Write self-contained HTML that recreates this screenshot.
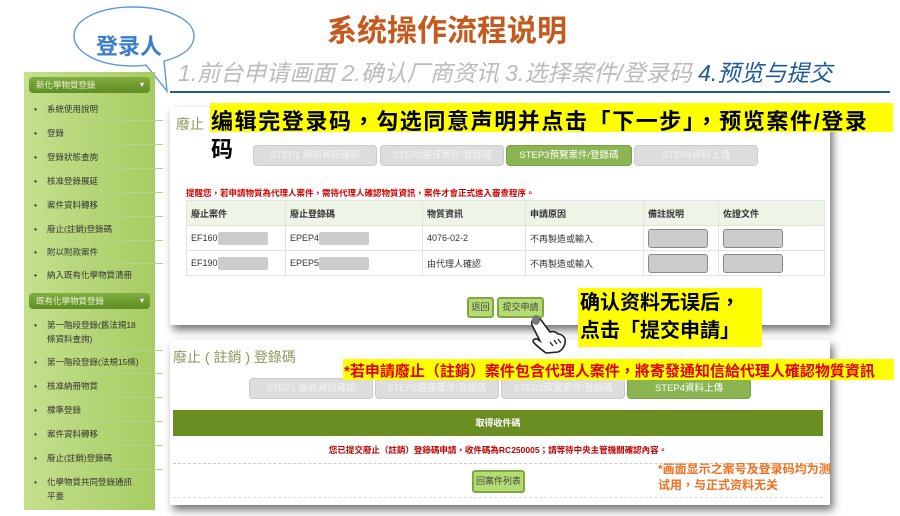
<!DOCTYPE html>
<html><head><meta charset="utf-8"><style>
*{margin:0;padding:0;box-sizing:border-box}
body{width:900px;height:516px;background:#fff;position:relative;overflow:hidden;font-family:"Liberation Sans","Noto Sans CJK TC",sans-serif}
.a{position:absolute;white-space:nowrap}
.sb{position:absolute;left:24px;top:72px;width:131px;height:438px;background:linear-gradient(90deg,#c5e08e,#a6cc62);}
.hd{position:absolute;left:5px;width:121px;height:16px;background:linear-gradient(#82ad40,#5f8d24);border-radius:4px;color:#eaf3d8;font-size:8.5px;line-height:16px;padding-left:7px}
.hd:after{content:"▾";position:absolute;right:6px;top:0;font-size:8px;color:#fff}
.it{position:absolute;left:10px;font-size:8.5px;color:#333;line-height:14px}
.it:before{content:"•";position:absolute;left:0}
.it span{display:block;margin-left:13px}
.ln{position:absolute;left:44px;width:95px;height:1px;background:#b6d386}
.panel{position:absolute;background:#fff;box-shadow:3px 5px 8px rgba(0,0,0,.55)}
.st{position:absolute;height:21px;border:1px solid #ccc;border-radius:4px;background:#ddd;color:#f4f4f4;font-size:9.5px;text-align:center;line-height:20px}
.st.g{background:#8ab552;border-color:#7aa045;color:#fff}
table{position:absolute;border-collapse:collapse;font-size:9px;color:#333}
td{border:1px solid #e2e2e2;height:25px;padding-left:4px}
.bl{display:inline-block;width:50px;height:13px;background:#ccc;border-radius:2px;vertical-align:middle}
.ib{display:block;width:60px;height:19px;background:#ccc;border:1px solid #888;border-radius:3px}
.btn{position:absolute;height:21px;background:#b5dc72;border:2px solid #7fa83e;border-radius:3px;font-size:9px;color:#444;text-align:center;line-height:17px}
</style></head><body>

<div class="a" style="left:327px;top:6px;font-size:30px;font-weight:bold;color:#c55a1f">系统操作流程说明</div>
<div class="a" style="left:178px;top:54px;font-size:23px;font-style:italic;color:#bbb">1.前台申请画面 2.确认厂商资讯 3.选择案件/登录码 <span style="color:#1f5a96">4.预览与提交</span></div>
<div class="a" style="left:170px;top:91px;width:720px;height:2px;background:#1f5f8b"></div>

<svg class="a" style="left:70px;top:4px" width="140" height="92"><path d="M63 3C30 3 4 15 4 32c0 17 26 30 59 30 5 0 9 0 13-1l21 26-3-30c20-5 30-14 30-25C124 15 96 3 63 3Z" fill="#fff" stroke="#5b9bd5" stroke-width="1.4"/></svg>
<div class="a" style="left:96px;top:29px;font-size:22px;font-weight:bold;color:#3a7dc8">登录人</div>

<div class="sb">
<div class="hd" style="top:5px">新化學物質登錄</div>
<div class="it" style="top:30px"><span>系統使用說明</span></div><div class="ln" style="top:48px;left:44px"></div>
<div class="it" style="top:54px"><span>登錄</span></div><div class="ln" style="top:72px"></div>
<div class="it" style="top:78px"><span>登錄狀態查詢</span></div><div class="ln" style="top:96px"></div>
<div class="it" style="top:102px"><span>核准登錄展延</span></div><div class="ln" style="top:120px"></div>
<div class="it" style="top:126px"><span>案件資料轉移</span></div><div class="ln" style="top:144px"></div>
<div class="it" style="top:150px"><span>廢止(註銷)登錄碼</span></div><div class="ln" style="top:168px"></div>
<div class="it" style="top:173px"><span>附以附款案件</span></div><div class="ln" style="top:191px"></div>
<div class="it" style="top:196px"><span>納入既有化學物質清冊</span></div>
<div class="hd" style="top:221px">既有化學物質登錄</div>
<div class="it" style="top:246px"><span>第一階段登錄(舊法規18<br>條資料查詢)</span></div><div class="ln" style="top:278px"></div>
<div class="it" style="top:283px"><span>第一階段登錄(法規15條)</span></div><div class="ln" style="top:301px"></div>
<div class="it" style="top:307px"><span>核准納冊物質</span></div><div class="ln" style="top:325px"></div>
<div class="it" style="top:331px"><span>標準登錄</span></div><div class="ln" style="top:349px"></div>
<div class="it" style="top:355px"><span>案件資料轉移</span></div><div class="ln" style="top:373px"></div>
<div class="it" style="top:379px"><span>廢止(註銷)登錄碼</span></div><div class="ln" style="top:397px"></div>
<div class="it" style="top:403px"><span>化學物質共同登錄通訊<br>平臺</span></div>
</div>

<div class="panel" style="left:170px;top:107px;width:660px;height:218px"></div>
<div class="a" style="left:176px;top:114px;font-size:14px;color:#8a9a5a">廢止（</div>
<div class="st" style="left:253px;top:145px;width:124px">STEP1 廠商資訊確認</div>
<div class="st" style="left:380px;top:145px;width:124px">STEP2選擇案件/登錄碼</div>
<div class="st g" style="left:506px;top:145px;width:126px">STEP3預覽案件/登錄碼</div>
<div class="st" style="left:634px;top:145px;width:124px">STEP4資料上傳</div>
<div class="a" style="left:210px;top:103px;width:683px;height:29px;background:#ffff00"></div>
<div class="a" style="left:211px;top:104px;font-size:22px;letter-spacing:1.6px;font-weight:bold;color:#000">编辑完登录码，勾选同意声明并点击「下一步」，预览案件/登录</div>
<div class="a" style="left:211px;top:132px;font-size:22px;font-weight:bold;color:#000">码</div>
<div class="a" style="left:186px;top:187px;font-size:8.5px;font-weight:bold;color:#c00">提醒您，若申請物質為代理人案件，需待代理人確認物質資訊，案件才會正式進入審查程序。</div>
<table style="left:186px;top:200px;width:639px">
<tr style="background:#eef5e6;font-weight:bold"><td style="width:99px">廢止案件</td><td style="width:137px">廢止登錄碼</td><td style="width:103px">物質資訊</td><td style="width:118px">申請原因</td><td style="width:75px">備註說明</td><td>佐證文件</td></tr>
<tr><td>EF160<span class="bl"></span></td><td>EPEP4<span class="bl"></span></td><td>4076-02-2</td><td>不再製造或輸入</td><td><span class="ib"></span></td><td><span class="ib"></span></td></tr>
<tr><td>EF190<span class="bl"></span></td><td>EPEP5<span class="bl"></span></td><td>由代理人確認</td><td>不再製造或輸入</td><td><span class="ib"></span></td><td><span class="ib"></span></td></tr>
</table>
<div class="btn" style="left:467px;top:297px;width:27px">返回</div>
<div class="btn" style="left:497px;top:297px;width:47px">提交申請</div>

<div class="panel" style="left:170px;top:340px;width:660px;height:165px"></div>
<svg class="a" style="left:528px;top:312px" width="40" height="42"><path d="M5 8c2-4 6-3 8 0l9 12c3-1 6 0 8 2 3 0 6 2 7 5 1 5-2 11-7 13l-12 1c-4-3-9-7-12-10-2-2 0-5 3-4l3 2L4 13c-1-2 0-4 1-5Z" fill="#fff" stroke="#222" stroke-width="1.6"/><path d="M22 30l3 4M26 28l3 4M30 27l3 4" stroke="#222" stroke-width="1.3"/><ellipse cx="8" cy="8" rx="4" ry="5" fill="#777"/></svg>
<div class="a" style="left:578px;top:288px;width:184px;height:59px;background:#ffff00"></div>
<div class="a" style="left:580px;top:289px;font-size:20px;font-weight:bold;line-height:28px;color:#000">确认资料无误后，<br>点击「提交申請」</div>

<div class="a" style="left:173px;top:347px;font-size:14px;color:#8a9a5a">廢止 ( 註銷 ) 登錄碼</div>
<div class="st" style="left:249px;top:378px;width:124px">STEP1 廠商資訊確認</div>
<div class="st" style="left:375px;top:378px;width:124px">STEP2選擇案件/登錄碼</div>
<div class="st" style="left:501px;top:378px;width:124px">STEP3預覽案件/登錄碼</div>
<div class="st g" style="left:627px;top:378px;width:124px">STEP4資料上傳</div>
<div class="a" style="left:343px;top:359px;width:551px;height:21px;background:#ffff00"></div>
<div class="a" style="left:344px;top:360px;font-size:15px;font-weight:bold;color:#e00000">*若申請廢止（註銷）案件包含代理人案件，將寄發通知信給代理人確認物質資訊</div>
<div class="a" style="left:173px;top:410px;width:650px;height:26px;background:#6b8e23;color:#fff;font-size:9px;font-weight:bold;text-align:center;line-height:26px">取得收件碼</div>
<div class="a" style="left:173px;top:444px;width:650px;text-align:center;font-size:8.5px;font-weight:bold;color:#b00">您已提交廢止（註銷）登錄碼申請，收件碼為RC250005；請等待中央主管機關確認內容。</div>
<div class="a" style="left:173px;top:463px;width:650px;border-top:1px dashed #ccc"></div>
<div class="a" style="left:173px;top:497px;width:650px;border-top:1px dashed #ddd"></div>
<div class="btn" style="left:472px;top:470px;width:53px;height:23px;line-height:19px">回案件列表</div>
<div class="a" style="left:658px;top:461px;font-size:12px;font-weight:bold;line-height:16px;color:#f07020">*画面显示之案号及登录码均为测<br>试用，与正式资料无关</div>
</body></html>
